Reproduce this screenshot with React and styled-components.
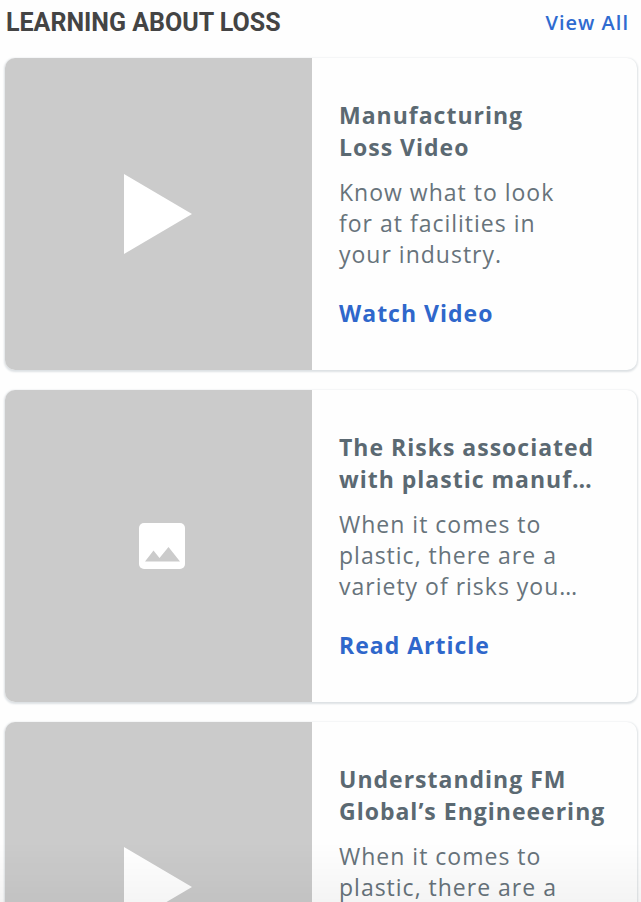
import React from "react";
import styled, { createGlobalStyle } from "styled-components";

const GlobalStyle = createGlobalStyle`
  * { box-sizing: border-box; }
  body {
    margin: 0;
    background: #fefefe;
    font-family: "Open Sans", "Noto Sans", sans-serif;
    letter-spacing: 1px;
  }
`;

const Page = styled.main`
  height: 100vh;
  overflow: hidden;
  padding: 0 4px 0 5px;
`;

const Header = styled.header`
  display: flex;
  align-items: center;
  justify-content: space-between;
  height: 46px;
  margin-bottom: 12px;
  padding: 0 8px 0 1px;
`;

const Heading = styled.h1`
  margin: 0;
  color: #444;
  font-family: "Roboto", sans-serif;
  font-size: 25px;
  font-weight: 700;
  letter-spacing: normal;
  line-height: 34px;
  text-transform: uppercase;
`;

const ViewAll = styled.a`
  color: #2f6bd0;
  font-size: 20px;
  font-weight: 600;
  line-height: 28px;
  text-decoration: none;
`;

const CardList = styled.div`
  display: flex;
  flex-direction: column;
  gap: 20px;
`;

const Card = styled.article`
  display: grid;
  grid-template-columns: 307fr 325fr;
  min-height: ${({ $tall }) => ($tall ? "330px" : "312px")};
  overflow: hidden;
  border-radius: 10px;
  background: #fefefe;
  box-shadow: 0 1px 2px 1px #dde1e4;
`;

const Media = styled.div`
  display: flex;
  align-items: center;
  justify-content: center;
  background: #cbcbcb;
  color: #fff;
`;

const Content = styled.div`
  padding: 41px 0 40px 27px;
`;

const Title = styled.h2`
  margin: 0 0 14px;
  color: #5b6972;
  font-size: 23px;
  font-weight: 700;
  line-height: 32px;
`;

const Summary = styled.p`
  margin: 0 0 27px;
  color: #67737b;
  font-size: 23px;
  line-height: 31px;
`;

const Action = styled.a`
  color: #2f67cb;
  font-size: 23px;
  font-weight: 700;
  line-height: 32px;
  text-decoration: none;
`;

const Fade = styled.div`
  position: fixed;
  inset: auto 0 0;
  height: 60px;
  background: linear-gradient(rgba(0, 0, 0, 0), rgba(0, 0, 0, 0.04));
  pointer-events: none;
`;

const PlayIcon = () => (
  <svg width="70" height="80" viewBox="0 0 70 80" fill="currentColor" aria-hidden="true">
    <path d="M0 0L68 40L0 80Z" />
  </svg>
);

const ImageIcon = () => (
  <svg width="52" height="46" viewBox="0 0 52 46" aria-hidden="true">
    <rect x="6" width="46" height="46" rx="5" fill="currentColor" />
    <path d="M12 38.5L20.5 27.5L26.5 35L35.5 24L47 38.5Z" fill="#cbcbcb" />
  </svg>
);

const items = [
  {
    icon: PlayIcon,
    title: ["Manufacturing", "Loss Video"],
    summary: ["Know what to look", "for at facilities in", "your industry."],
    action: "Watch Video",
  },
  {
    icon: ImageIcon,
    title: ["The Risks associated", "with plastic manuf…"],
    summary: ["When it comes to", "plastic, there are a", "variety of risks you…"],
    action: "Read Article",
  },
  {
    icon: PlayIcon,
    title: ["Understanding FM", "Global’s Engineeering"],
    summary: ["When it comes to", "plastic, there are a"],
    tall: true,
  },
];

const Lines = ({ lines }) =>
  lines.map((line, i) => (
    <React.Fragment key={line}>
      {i > 0 && <br />}
      {line}
    </React.Fragment>
  ));

export default function App() {
  return (
    <Page>
      <GlobalStyle />
      <Header>
        <Heading>Learning about loss</Heading>
        <ViewAll href="#all">View All</ViewAll>
      </Header>
      <CardList>
        {items.map(({ icon: Icon, title, summary, action, tall }) => (
          <Card key={title[0]} $tall={tall}>
            <Media>
              <Icon />
            </Media>
            <Content>
              <Title><Lines lines={title} /></Title>
              <Summary><Lines lines={summary} /></Summary>
              {action && <Action href="#learn">{action}</Action>}
            </Content>
          </Card>
        ))}
      </CardList>
      <Fade />
    </Page>
  );
}
